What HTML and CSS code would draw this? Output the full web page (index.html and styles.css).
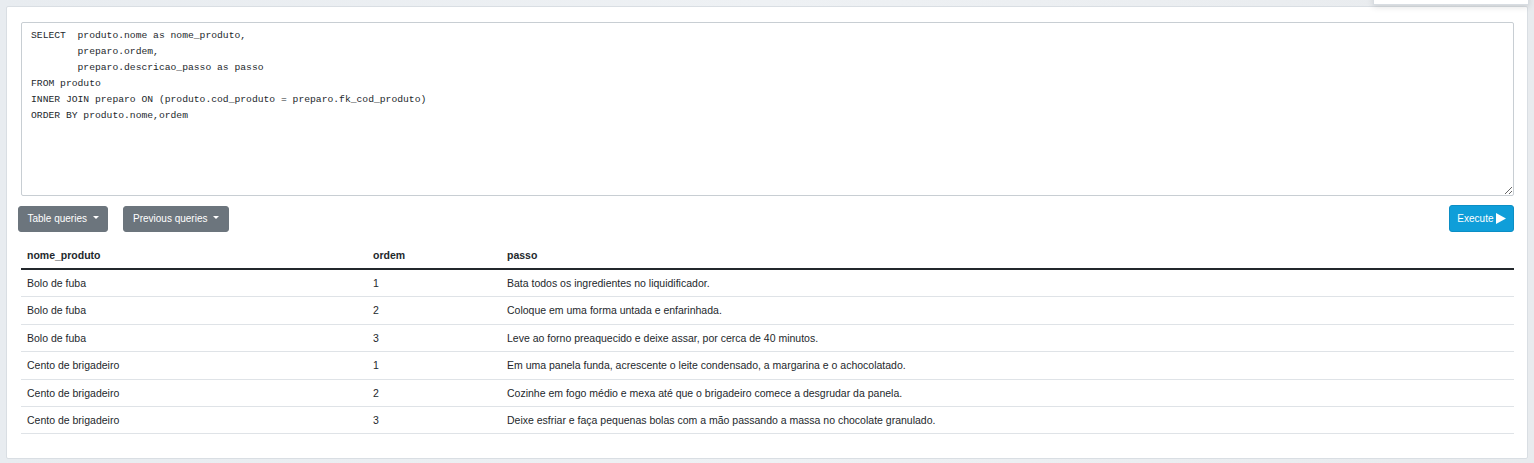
FILE: index.html
```html
<!DOCTYPE html>
<html>
<head>
<meta charset="utf-8">
<link rel="stylesheet" href="styles.css">
</head>
<body>
<div class="popup"></div>
<div class="card">
  <textarea class="query" spellcheck="false">SELECT  produto.nome as nome_produto,
        preparo.ordem,
        preparo.descricao_passo as passo
FROM produto
INNER JOIN preparo ON (produto.cod_produto = preparo.fk_cod_produto)
ORDER BY produto.nome,ordem</textarea>
  <div class="toolbar">
    <div class="left-btns">
      <button class="btn btn-gray">Table queries <span class="caret"></span></button>
      <button class="btn btn-gray">Previous queries <span class="caret"></span></button>
    </div>
    <button class="btn btn-exec">Execute <svg class="play" width="10" height="11" viewBox="0 0 10 11"><path d="M0 0 L10 5.5 L0 11 Z" fill="#fff"/></svg></button>
  </div>
  <table class="results">
    <thead>
      <tr><th class="c1">nome_produto</th><th class="c2">ordem</th><th>passo</th></tr>
    </thead>
    <tbody>
      <tr><td>Bolo de fuba</td><td>1</td><td>Bata todos os ingredientes no liquidificador.</td></tr>
      <tr><td>Bolo de fuba</td><td>2</td><td>Coloque em uma forma untada e enfarinhada.</td></tr>
      <tr><td>Bolo de fuba</td><td>3</td><td>Leve ao forno preaquecido e deixe assar, por cerca de 40 minutos.</td></tr>
      <tr><td>Cento de brigadeiro</td><td>1</td><td>Em uma panela funda, acrescente o leite condensado, a margarina e o achocolatado.</td></tr>
      <tr><td>Cento de brigadeiro</td><td>2</td><td>Cozinhe em fogo médio e mexa até que o brigadeiro comece a desgrudar da panela.</td></tr>
      <tr><td>Cento de brigadeiro</td><td>3</td><td>Deixe esfriar e faça pequenas bolas com a mão passando a massa no chocolate granulado.</td></tr>
    </tbody>
  </table>
</div>
</body>
</html>
```

FILE: styles.css
```css
html, body {
  margin: 0;
  padding: 0;
}
body {
  background: linear-gradient(90deg, #e8ecf0 0%, #eef1f4 50%, #e8ebee 100%);
  font-family: "Liberation Sans", Arial, sans-serif;
  color: #23282c;
  height: 463px;
  overflow: hidden;
  position: relative;
}
.popup {
  position: absolute;
  top: -10px;
  left: 1373px;
  width: 154px;
  height: 13px;
  background: #fff;
  border: 1px solid #d8dde2;
  box-shadow: 0 2px 6px rgba(0,0,0,0.12);
}
.card {
  margin: 6px 6px 0 6px;
  height: 453px;
  box-sizing: border-box;
  background: #fff;
  border: 1px solid #d9dee3;
  border-radius: 2px;
  padding: 15px 13px 0 11px;
}
.query {
  display: block;
  box-sizing: border-box;
  margin-left: 3px;
  width: calc(100% - 3px);
  height: 174px;
  border: 1px solid #c8ced3;
  border-radius: 2px;
  padding: 5px 9px;
  font-family: "Liberation Mono", "DejaVu Sans Mono", monospace;
  font-size: 9.7px;
  line-height: 16px;
  color: #23282c;
  resize: vertical;
  outline: none;
}
.toolbar {
  display: flex;
  justify-content: space-between;
  align-items: center;
  margin-top: 9px;
}
.left-btns {
  display: flex;
  gap: 15px;
}
.btn {
  height: 26px;
  border-radius: 3px;
  font-family: "Liberation Sans", Arial, sans-serif;
  font-size: 10px;
  color: #fff;
  padding: 0 8.5px;
  display: flex;
  align-items: center;
  cursor: pointer;
}
.btn-gray {
  background: #6c757d;
  border: 1px solid #6c757d;
}
.caret {
  display: inline-block;
  margin-left: 6px;
  width: 0;
  height: 0;
  border-left: 3px solid transparent;
  border-right: 3px solid transparent;
  border-top: 3px solid #fff;
  position: relative;
  top: -1px;
}
.btn-exec {
  background: #0f9ed9;
  border: 1px solid #0b8ec5;
  padding: 0 7.5px;
  height: 27px;
}
.play {
  margin-left: 2px;
}
.results {
  margin-top: 10px;
  margin-left: 3px;
  width: calc(100% - 3px);
  border-collapse: collapse;
  font-size: 10.5px;
}
.results th {
  text-align: left;
  font-weight: bold;
  padding: 6px 6px;
  line-height: 14px;
  border-bottom: 2px solid #23282c;
}
.results th.c1 { width: 334px; }
.results th.c2 { width: 122px; }
.results td {
  padding: 6px 6px;
  line-height: 14.4px;
  border-bottom: 1px solid #dfe3e7;
  vertical-align: middle;
}
```
